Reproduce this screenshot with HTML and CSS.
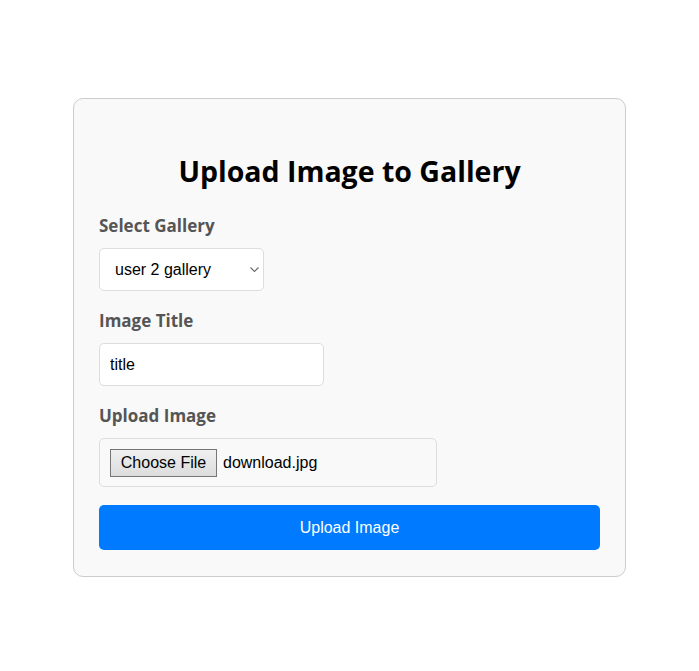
FILE: index.html
```html
<!DOCTYPE html>
<html lang="en">
<head>
<meta charset="utf-8">
<title>Upload Image to Gallery</title>
<link rel="stylesheet" href="styles.css">
</head>
<body>
<div class="card">
  <h2 class="title">Upload Image to Gallery</h2>
  <form class="form">
    <div class="group">
      <label class="label" for="gallery">Select Gallery</label>
      <span class="select-wrap">
        <select class="select" id="gallery">
          <option>user 2 gallery</option>
        </select>
        <svg class="chevron" width="9" height="5" viewBox="0 0 9 5" aria-hidden="true">
          <path d="M0.5 0.5 L4.5 4.5 L8.5 0.5" fill="none" stroke="#6b6b6b" stroke-width="1.1"/>
        </svg>
      </span>
    </div>
    <div class="group">
      <label class="label" for="title">Image Title</label>
      <input class="input" id="title" type="text" value="title">
    </div>
    <div class="group">
      <label class="label">Upload Image</label>
      <div class="file">
        <button type="button" class="file-btn">Choose File</button>
        <span class="file-name">download.jpg</span>
      </div>
    </div>
    <button type="button" class="submit">Upload Image</button>
  </form>
</div>
</body>
</html>
```
FILE: styles.css
```css
html, body {
  margin: 0;
  padding: 0;
  background: #fff;
}
body {
  padding-top: 98px;
  font-family: "Liberation Sans", Arial, sans-serif;
}
.card {
  box-sizing: border-box;
  width: 553px;
  margin: 0 auto;
  padding: 25px 25px 26px;
  background: #f9f9f9;
  border: 1px solid #ccc;
  border-radius: 10px;
}
.title {
  margin: 27px 0 0;
  font-family: "Open Sans", sans-serif;
  font-weight: 700;
  font-size: 28.5px;
  line-height: 40px;
  text-align: center;
  color: #000;
}
.form {
  display: flex;
  flex-direction: column;
  margin-top: 23px;
}
.group {
  display: flex;
  flex-direction: column;
  align-items: flex-start;
  margin-bottom: 18px;
}
.label {
  font-family: "Open Sans", sans-serif;
  font-weight: 700;
  font-size: 17px;
  line-height: 24px;
  color: #555;
  margin-bottom: 10px;
}
.select-wrap {
  position: relative;
  display: inline-block;
}
.select {
  display: block;
  box-sizing: border-box;
  height: 43px;
  width: 165px;
  padding: 0 20px 0 15px;
  font-family: "Liberation Sans", Arial, sans-serif;
  font-size: 16px;
  color: #000;
  background: #fff;
  border: 1px solid #ddd;
  border-radius: 5px;
  -webkit-appearance: none;
  appearance: none;
}
.chevron {
  position: absolute;
  right: 5px;
  top: 19px;
  pointer-events: none;
}
.input {
  box-sizing: border-box;
  height: 43px;
  width: 225px;
  padding: 0 10px;
  font-family: "Liberation Sans", Arial, sans-serif;
  font-size: 16px;
  color: #000;
  background: #fff;
  border: 1px solid #ddd;
  border-radius: 5px;
}
.file {
  box-sizing: border-box;
  display: flex;
  align-items: center;
  gap: 6px;
  height: 49px;
  width: 338px;
  padding: 0 10px;
  border: 1px solid #ddd;
  border-radius: 5px;
  background: #f9f9f9;
}
.file-btn {
  box-sizing: border-box;
  height: 28px;
  width: 107px;
  padding: 0;
  font-family: "Liberation Sans", Arial, sans-serif;
  font-size: 16px;
  color: #000;
  background: linear-gradient(#f0f0f0, #dcdcdc);
  border: 1px solid #767676;
  border-radius: 0;
}
.file-name {
  font-size: 16px;
  color: #000;
}
.submit {
  height: 45px;
  width: 100%;
  margin-top: 0;
  font-family: "Liberation Sans", Arial, sans-serif;
  font-size: 16px;
  color: #fff;
  background: #007bff;
  border: none;
  border-radius: 5px;
}
```
